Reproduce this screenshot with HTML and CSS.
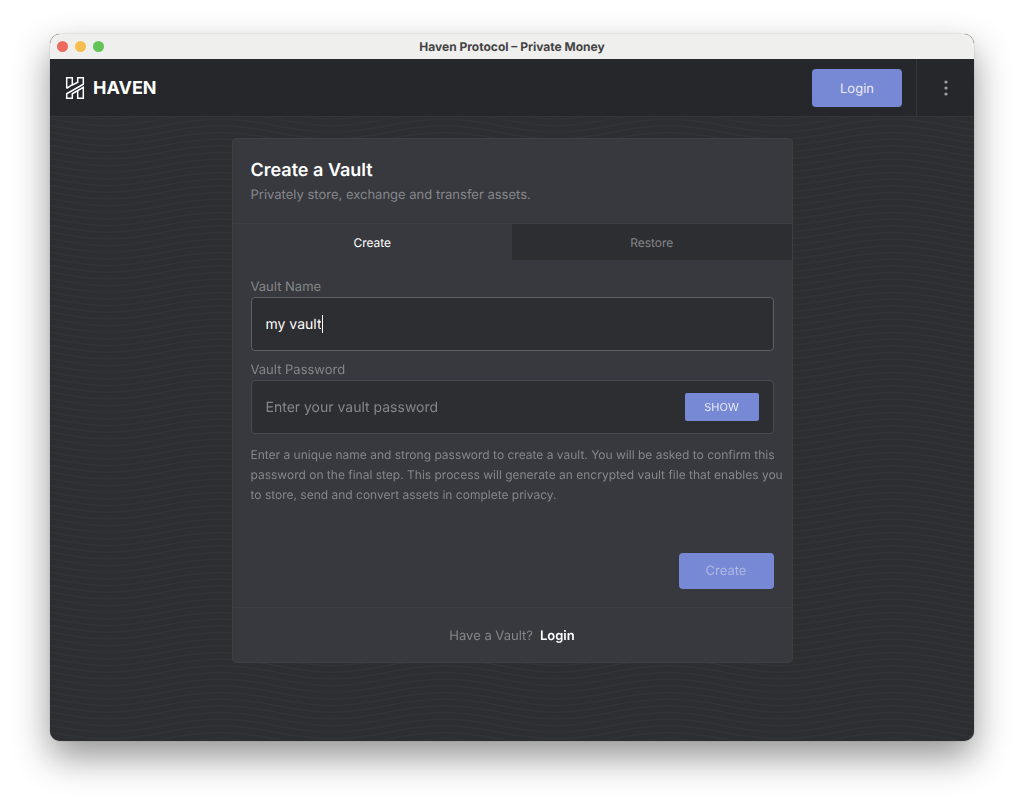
FILE: index.html
```html
<!DOCTYPE html>
<html lang="en">
<head>
<meta charset="utf-8">
<title>Haven Protocol – Private Money</title>
<link rel="stylesheet" href="styles.css">
</head>
<body>
<div class="window">
  <div class="titlebar">
    <div class="lights"><span class="light red"></span><span class="light yellow"></span><span class="light green"></span></div>
    <div class="window-title">Haven Protocol – Private Money</div>
  </div>
  <header class="header">
    <a class="brand" href="#">
      <svg class="logo" viewBox="0 0 20 24" width="20" height="24" fill="none" stroke="#fff" stroke-width="1.5" aria-hidden="true">
        <path d="M1.7 12.6V1.7H7.3V8.6L1.7 12.4M7.3 9.2L12.7 6.2V1.7H18.3V8.2L1.7 17.8V22.3H7.3V17.8L18.3 11.4V22.3H12.7V15"/>
      </svg>
      <span>HAVEN</span>
    </a>
    <div class="header-actions">
      <button class="btn login" type="button">Login</button>
      <button class="menu" type="button" aria-label="Menu"><svg viewBox="0 0 4 16" width="4" height="16" fill="#a0a1a3"><circle cx="2" cy="2" r="1.6"/><circle cx="2" cy="8" r="1.6"/><circle cx="2" cy="14" r="1.6"/></svg></button>
    </div>
  </header>
  <main class="content">
    <svg class="waves" width="100%" height="100%" aria-hidden="true">
      <defs><pattern id="wave" width="224" height="20" patternUnits="userSpaceOnUse" y="2">
        <g fill="none" stroke="#323337" stroke-width="1.2">
          <path id="w" d="M-54 0C-13 0 17 13.3 58 13.3S129 0 170 0S241 13.3 282 13.3"/>
          <use href="#w" y="-13.33"/><use href="#w" y="-6.67"/><use href="#w" y="6.67"/><use href="#w" y="13.33"/><use href="#w" y="20"/>
        </g></pattern></defs>
      <rect width="100%" height="100%" fill="url(#wave)"/>
    </svg>
    <form class="card">
      <div class="card-head"><h1>Create a Vault</h1><p>Privately store, exchange and transfer assets.</p></div>
      <div class="tabs"><button class="tab active" type="button">Create</button><button class="tab" type="button">Restore</button></div>
      <div class="card-body">
        <label for="name">Vault Name</label>
        <div class="field focused"><input id="name" type="text" value="my vault" autofocus><span class="caret"></span></div>
        <label for="password">Vault Password</label>
        <div class="field"><input id="password" type="password" placeholder="Enter your vault password"><button class="show" type="button">SHOW</button></div>
        <p class="info">Enter a unique name and strong password to create a vault. You will be asked to confirm this password on the final step. This process will generate an encrypted vault file that enables you to store, send and convert assets in complete privacy.</p>
        <div class="submit"><button class="btn create" type="button">Create</button></div>
      </div>
      <div class="card-foot">Have a Vault? <a href="#">Login</a></div>
    </form>
  </main>
</div>
</body>
</html>
```
FILE: styles.css
```css
* { box-sizing: border-box; }
body { margin: 0; min-height: 100vh; padding: 34px 50px 66px; display: flex; background: #fff; font-family: Inter, sans-serif; color: #fff; text-rendering: geometricPrecision; }
button, input { font: inherit; color: inherit; border: 0; margin: 0; text-rendering: inherit; }
.window { flex: 1; min-width: 0; display: flex; flex-direction: column; border-radius: 10px; overflow: hidden; background: #2d2e32; box-shadow: 0 0 1px rgba(0,0,0,.5), 0 16px 36px rgba(0,0,0,.42); }
.titlebar { height: 25px; padding: 0 7px; display: grid; grid-template-columns: 1fr auto 1fr; align-items: center; background: #efefee; color: #444; }
.lights { display: flex; gap: 7px; }
.light { width: 11px; height: 11px; border-radius: 50%; }
.red { background: #ee6a5f; }
.yellow { background: #f5bd4f; }
.green { background: #61c454; }
.window-title { font-size: 12px; line-height: 24px; font-weight: 700; }
.header { height: 58px; display: flex; justify-content: space-between; background: #26272b; border-bottom: 1px solid #35363b; }
.brand { display: flex; align-items: center; gap: 8px; padding-left: 15px; color: #fff; text-decoration: none; font-size: 18px; line-height: 24px; font-weight: 700; }
.brand span { padding-top: 2px; }
.logo { display: block; }
.header-actions { display: flex; align-items: center; gap: 14px; }
.btn { border-radius: 4px; background: #7789d4; font-size: 13px; }
.login { width: 90px; height: 38px; padding: 2px 0 0; color: #e9ebf8; }
.menu { width: 58px; align-self: stretch; display: flex; align-items: center; justify-content: center; padding: 0; background: none; border-left: 1px solid #35363b; }
.content { flex: 1; position: relative; display: flex; justify-content: center; align-items: flex-start; padding: 21px 16px 78px; }
.waves { position: absolute; inset: 0; }
.card { position: relative; width: 100%; max-width: 561px; border: 1px solid #3d3f44; border-radius: 4px; background: #38393e; overflow: hidden; }
.card-head { padding: 20px 18px 17px; border-bottom: 1px solid #3d3f44; }
h1 { margin: 0; font-size: 18px; line-height: 24px; font-weight: 600; }
.card-head p { margin: 1px 0 0; font-size: 13px; line-height: 22px; color: #85868a; }
.tabs { display: grid; grid-template-columns: 1fr 1fr; }
.tab { height: 36px; background: #2d2e32; color: #85868a; font-size: 12px; }
.tab.active { background: none; color: #fff; }
.card-body { padding: 17px 18px 18px; }
label { display: block; font-size: 13px; line-height: 20px; color: #85868a; }
.field { height: 54px; display: flex; align-items: center; margin-bottom: 9px; padding: 0 14px; border: 1px solid #484a4f; border-radius: 4px; background: #2d2e32; }
.field.focused { border-color: #5d5f64; }
.field input { flex: 1; min-width: 0; padding: 0; background: none; outline: 0; font-size: 14px; }
.field.focused input { flex: 0 1 auto; field-sizing: content; caret-color: transparent; }
.caret { width: 1px; height: 18px; margin-left: 1px; background: #fff; }
.field input::placeholder { color: #85868a; opacity: 1; }
.show { width: 74px; height: 28px; border-radius: 2px; background: #7789d4; color: #e9ebf8; font-size: 11px; }
.info { margin: 11px -16px 48px 0; font-size: 12px; line-height: 20px; color: #85868a; }
.submit { display: flex; justify-content: flex-end; }
.create { width: 95px; height: 36px; color: #adb8e5; }
.card-foot { height: 55px; padding-top: 1px; display: flex; align-items: center; justify-content: center; gap: 7px; border-top: 1px solid #3d3f44; font-size: 13px; color: #85868a; }
.card-foot a { color: #fff; font-weight: 600; text-decoration: none; }
```
